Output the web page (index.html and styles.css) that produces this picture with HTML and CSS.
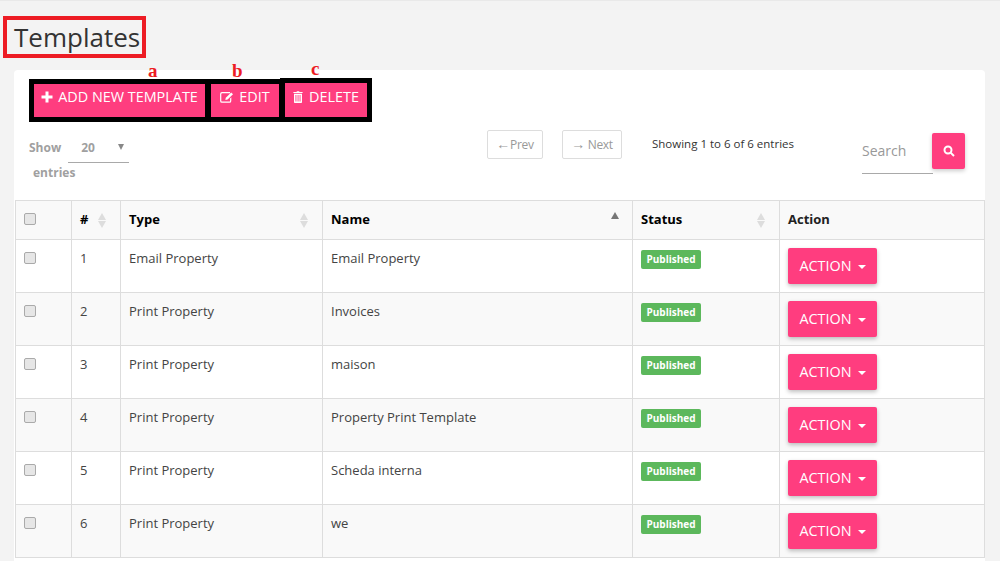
FILE: index.html
```html
<!DOCTYPE html>
<html lang="en">
<head>
<meta charset="utf-8">
<title>Templates</title>
<link rel="stylesheet" href="styles.css">
</head>
<body>
<div class="page">
  <h1 class="title">Templates</h1>
  <main class="card">
    <div class="toolbar">
      <span class="mark mark-a">a</span><span class="mark mark-b">b</span><span class="mark mark-c">c</span>
      <button class="btn btn-add"><svg class="ico" viewBox="0 0 12 12"><path d="M4.5 0.5h3v4h4v3h-4v4h-3v-4h-4v-3h4z"/></svg>ADD NEW TEMPLATE</button>
      <button class="btn btn-edit"><svg class="ico ico-edit" viewBox="0 0 14 12"><path d="M2 1h8v1.2H2.2a.9.9 0 0 0-.9.9v6.6c0 .5.4.9.9.9h7c.5 0 .9-.4.9-.9V7.5l1.2-1.2v3.6A1.9 1.9 0 0 1 9.4 11.8H2A1.9 1.9 0 0 1 .1 9.9V2.9A1.9 1.9 0 0 1 2 1z"/><path d="M11.2 1.4l1.8 1.8-5.4 5.4-2.3.5.5-2.3z"/></svg>EDIT</button>
      <button class="btn btn-del"><svg class="ico ico-del" viewBox="0 0 10 12"><path d="M3.4 1.1L4 .2h2l.6.9H9.6v1H.4v-1zM1 2.7h8v8.2c0 .6-.4 1-1 1H2c-.6 0-1-.4-1-1zM2.5 4v6.6h.9V4zM4.6 4v6.6h.9V4zM6.6 4v6.6h.9V4z" fill-rule="evenodd"/></svg>DELETE</button>
    </div>
    <div class="controls">
      <div class="length">
        <div class="length-top"><span>Show</span><span class="select"><b>20</b><i class="select-arrow"></i></span></div>
        <div class="length-end">entries</div>
      </div>
      <div class="pager">
        <a class="page-btn prev"><span class="arrow">←</span>Prev</a>
        <a class="page-btn next"><span class="arrow">→</span> Next</a>
      </div>
      <div class="info">Showing 1 to 6 of 6 entries</div>
      <div class="search">
        <span class="search-input">Search</span>
        <button class="search-btn"><svg viewBox="0 0 12 12" class="search-ico"><circle cx="5" cy="5" r="3.5"/><path d="M7.6 7.6L11 11"/></svg></button>
      </div>
    </div>
    <table class="grid">
      <colgroup><col class="c1"><col class="c2"><col class="c3"><col class="c4"><col class="c5"><col class="c6"></colgroup>
      <thead>
        <tr>
          <th><span class="check"></span></th>
          <th class="sortable">#<span class="sort"></span></th>
          <th class="sortable">Type<span class="sort"></span></th>
          <th class="sortable">Name<span class="sort-up"></span></th>
          <th class="sortable">Status<span class="sort"></span></th>
          <th>Action</th>
        </tr>
      </thead>
      <tbody>
        <tr><td><span class="check"></span></td><td>1</td><td>Email Property</td><td>Email Property</td><td><span class="badge">Published</span></td><td><button class="action">ACTION<i class="caret"></i></button></td></tr>
        <tr><td><span class="check"></span></td><td>2</td><td>Print Property</td><td>Invoices</td><td><span class="badge">Published</span></td><td><button class="action">ACTION<i class="caret"></i></button></td></tr>
        <tr><td><span class="check"></span></td><td>3</td><td>Print Property</td><td>maison</td><td><span class="badge">Published</span></td><td><button class="action">ACTION<i class="caret"></i></button></td></tr>
        <tr><td><span class="check"></span></td><td>4</td><td>Print Property</td><td>Property Print Template</td><td><span class="badge">Published</span></td><td><button class="action">ACTION<i class="caret"></i></button></td></tr>
        <tr><td><span class="check"></span></td><td>5</td><td>Print Property</td><td>Scheda interna</td><td><span class="badge">Published</span></td><td><button class="action">ACTION<i class="caret"></i></button></td></tr>
        <tr><td><span class="check"></span></td><td>6</td><td>Print Property</td><td>we</td><td><span class="badge">Published</span></td><td><button class="action">ACTION<i class="caret"></i></button></td></tr>
      </tbody>
    </table>
  </main>
</div>
</body>
</html>
```
FILE: styles.css
```css
* { box-sizing: border-box; }
html, body { margin: 0; height: 561px; overflow: hidden; }
body {
  background: #f3f3f3;
  border-top: 1px solid #e9e9e9;
  font-family: "Open Sans", sans-serif;
  color: #333;
}
.page { padding: 15px 15px 0 3px; }
.title {
  display: inline-block;
  margin: 0;
  width: 143px;
  height: 42px;
  border: 4px solid #ed1c24;
  padding-left: 7px;
  font-size: 26px;
  font-weight: 400;
  line-height: 34px;
  color: #333;
  white-space: nowrap;
  vertical-align: top;
}
.card {
  margin: 12px 0 0 11px;
  width: 971px;
  height: 520px;
  background: #fff;
  border-radius: 4px;
  padding-top: 9px;
}
.toolbar {
  position: relative;
  margin-left: 15px;
  width: 343px;
  height: 43px;
  background: #000;
  padding: 5px;
  display: flex;
  gap: 6px;
}
.btn {
  height: 33px;
  border: 0;
  background: #ff3d7f;
  color: #fff;
  font: 400 14.4px/26px "Open Sans", sans-serif;
  padding: 0 0 7px;
  display: flex;
  align-items: center;
  justify-content: center;
}
.btn-add { width: 171px; }
.btn-edit { width: 68px; }
.btn-del {
  width: 82px;
  height: 34px;
  margin-top: -1px;
  padding-top: 1px;
  box-shadow: 0 0 0 5px #000;
}
.ico { width: 12px; height: 12px; fill: #fff; margin-right: 5px; }
.ico-edit { width: 14px; margin-right: 5px; }
.ico-del { width: 10px; margin-right: 6px; }
.mark {
  position: absolute;
  top: -18px;
  color: #ed1c24;
  font: 700 19px/20px "Liberation Serif", serif;
}
.mark-a { left: 119px; }
.mark-b { left: 203px; }
.mark-c { left: 282px; top: -20px; }
.controls {
  display: flex;
  align-items: flex-start;
  height: 70px;
  margin-top: 8px;
  padding-left: 15px;
}
.length { width: 458px; padding-top: 9px; font-size: 12px; font-weight: 700; color: #a0a0a0; }
.length-top { display: flex; align-items: flex-start; gap: 7px; line-height: 17px; }
.select {
  width: 61px;
  height: 24px;
  border-bottom: 1px solid #a9a9a9;
  padding-left: 13px;
  display: flex;
  justify-content: space-between;
  padding-right: 5px;
}
.select b { font-weight: 700; }
.select-arrow {
  width: 0; height: 0; margin-top: 5px;
  border: 3px solid transparent;
  border-width: 6px 3px 0;
  border-top-color: #888;
}
.length-end { padding-left: 4px; margin-top: 1px; line-height: 17px; }
.pager { display: flex; gap: 19px; width: 165px; }
.page-btn {
  height: 29px;
  border: 1px solid #ddd;
  border-radius: 2px;
  font-size: 12px;
  line-height: 27px;
  text-align: center;
  color: #999;
  letter-spacing: -.3px;
}
.arrow { font-family: "Liberation Sans", sans-serif; font-size: 14px; }
.prev { width: 56px; }
.next { width: 60px; }
.info { width: 210px; font-size: 11.5px; line-height: 28px; color: #333; white-space: nowrap; }
.search { display: flex; margin-top: 3px; }
.search-input {
  width: 71px;
  height: 41px;
  border-bottom: 1px solid #a9a9a9;
  font-size: 14px;
  line-height: 36px;
  color: #999;
}
.search-btn {
  width: 33px;
  height: 36px;
  margin-left: -1px;
  border: 0;
  border-radius: 2px;
  background: #ff3d7f;
  box-shadow: 0 2px 4px rgba(0,0,0,.2);
  display: flex;
  align-items: center;
  justify-content: center;
  padding: 0;
}
.search-ico { width: 12px; height: 12px; fill: none; stroke: #fff; stroke-width: 2; }
.grid {
  table-layout: fixed;
  border-collapse: collapse;
  margin-left: 1px;
  width: 969px;
  font-size: 13px;
}
.c1 { width: 56px; } .c2 { width: 49px; } .c3 { width: 202px; }
.c4 { width: 310px; } .c5 { width: 147px; } .c6 { width: 205px; }
.grid th, .grid td {
  border: 1px solid #ddd;
  padding: 0 8px;
  text-align: left;
  vertical-align: top;
  position: relative;
}
.grid th {
  height: 39px;
  background: #f9f9f9;
  color: #000;
  font-weight: 700;
  line-height: 37px;
}
.grid th:last-child { color: #222; }
.grid td { height: 53px; padding-top: 8px; line-height: 20px; color: #444; }
.grid tbody tr:nth-child(even) td { background: #f9f9f9; }
.check {
  display: block;
  width: 12px;
  height: 12px;
  border: 1px solid #aaa;
  border-radius: 2px;
  background: #e6e6e6;
}
th .check { margin-top: 12px; }
td .check { margin-top: 4px; }
.sort, .sort-up { position: absolute; right: 14px; top: 12px; width: 8px; }
.sort::before, .sort::after {
  content: "";
  display: block;
  width: 0; height: 0;
  border-left: 4px solid transparent;
  border-right: 4px solid transparent;
}
.sort::before { border-bottom: 7px solid #ddd; margin-bottom: 1px; }
.sort::after { border-top: 7px solid #ddd; }
.sort-up {
  top: 11px;
  width: 0; height: 0;
  right: 13px;
  border-left: 4px solid transparent;
  border-right: 4px solid transparent;
  border-bottom: 7px solid #777;
}
.badge {
  display: block;
  width: 60px;
  height: 19px;
  margin-top: 2px;
  background: #5cb85c;
  border-radius: 2px;
  color: #fff;
  font-size: 10px;
  font-weight: 700;
  line-height: 18px;
  text-align: center;
}
.action {
  display: block;
  width: 89px;
  height: 36px;
  border: 0;
  padding: 0;
  border-radius: 2px;
  background: #ff3d7f;
  box-shadow: 0 2px 4px rgba(0,0,0,.25);
  color: #fff;
  font: 400 14.4px/36px "Open Sans", sans-serif;
}
.caret {
  display: inline-block;
  width: 0; height: 0;
  margin-left: 6px;
  vertical-align: 2px;
  border-left: 4px solid transparent;
  border-right: 4px solid transparent;
  border-top: 4px solid #fff;
}
```
